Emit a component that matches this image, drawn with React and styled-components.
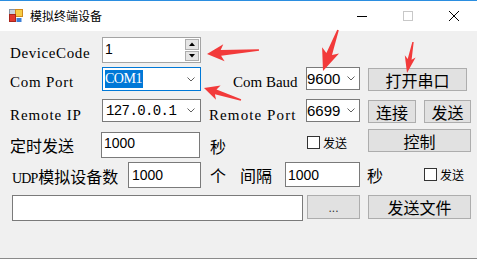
import React from 'react';
import styled, { createGlobalStyle } from 'styled-components';

const MONO = `"Liberation Mono", "DejaVu Sans Mono", monospace`;
const SERIF = `"Liberation Serif", "DejaVu Serif", serif`;
const CJK = `"Noto Sans CJK SC", "Noto Sans", sans-serif`;
const SANS = `"Liberation Sans", Arial, sans-serif`;

const Global = createGlobalStyle`
  html, body { margin: 0; padding: 0; background: #f0f0f0; }
  body { width: 477px; height: 259px; overflow: hidden; }
  * { box-sizing: border-box; }
`;

const Window = styled.div`
  position: relative;
  width: 477px;
  height: 259px;
  display: flex;
  flex-direction: column;
  background: #f0f0f0;
  overflow: hidden;
  font-family: ${CJK};
  color: #000;
`;

const TitleBar = styled.div`
  flex: none;
  height: 31px;
  border-top: 1px solid #2b8ee0;
  background: #fff;
  display: flex;
  align-items: center;
  padding-left: 9px;
`;

const TitleText = styled.span`
  margin-left: 7px;
  font-size: 12px;
  line-height: 16px;
`;

const Controls = styled.div`
  margin-left: auto;
  display: flex;
  height: 100%;
`;

const CtrlButton = styled.div`
  width: 46px;
  height: 100%;
  display: flex;
  align-items: center;
  justify-content: center;
`;

const Body = styled.div`
  flex: 1;
  display: flex;
  flex-direction: column;
  padding: 6px 0 0 10px;
  border-bottom: 1px solid #8a8a8a;
`;

const Row = styled.div`
  flex: none;
  display: flex;
  align-items: flex-start;
  height: ${p => p.$h}px;
  margin-top: ${p => p.$mt || 0}px;
`;

const Label = styled.span`
  flex: none;
  width: ${p => p.$w}px;
  margin-left: ${p => p.$ml || 0}px;
  margin-top: ${p => p.$dy || 0}px;
  font-family: ${p => (p.$latin ? SERIF : CJK)};
  font-size: ${p => (p.$latin ? 15 : 16)}px;
  letter-spacing: ${p => p.$ls || 0}px;
  line-height: 20px;
  white-space: nowrap;
`;

const Latin = styled.span`
  font-family: ${SERIF};
  font-size: 14px;
  letter-spacing: -0.9px;
  margin-right: 1px;
`;

const TextBox = styled.div`
  flex: none;
  width: ${p => p.$w}px;
  height: ${p => p.$h}px;
  margin-left: ${p => p.$ml || 0}px;
  margin-top: ${p => p.$dy || 0}px;
  padding: ${p => p.$pt ?? 1}px 0 0 ${p => p.$pl ?? 2}px;
  background: #fff;
  border: 1px solid #7a7a7a;
  font-family: ${SANS};
  font-size: 14px;
  line-height: 18px;
  white-space: nowrap;
`;

const SpinBox = styled.div`
  flex: none;
  width: ${p => p.$w}px;
  height: ${p => p.$h}px;
  display: flex;
  background: #fff;
  border: 1px solid #a4a4a4;
`;

const SpinValue = styled.span`
  flex: 1;
  padding: 2px 0 0 2px;
  font-family: ${SANS};
  font-size: 14px;
  line-height: 18px;
`;

const SpinCol = styled.div`
  width: 15px;
  display: flex;
  flex-direction: column;
  padding: 1px 1px 1px 0;
`;

const SpinBtn = styled.div`
  flex: 1;
  display: flex;
  align-items: center;
  justify-content: center;
  background: #e5e5e5;
  border: 1px solid #adadad;
  & + & { margin-top: 1px; }
`;

const Combo = styled.div`
  flex: none;
  width: ${p => p.$w}px;
  height: ${p => p.$h}px;
  margin-left: ${p => p.$ml || 0}px;
  display: flex;
  align-items: center;
  padding-left: ${p => p.$pl ?? 2}px;
  background: #fff;
  border: 1px solid ${p => (p.$focus ? '#0078d7' : '#7a7a7a')};
`;

const ComboText = styled.span`
  font-family: ${p => (p.$mono ? MONO : SANS)};
  font-size: ${p => (p.$mono ? 14 : 15)}px;
  letter-spacing: ${p => (p.$mono ? '-0.6px' : '0')};
  line-height: 18px;
  white-space: nowrap;
`;

const Selected = styled.span`
  font-family: ${SERIF};
  font-size: 14px;
  letter-spacing: -0.5px;
  line-height: 18px;
  padding: 0 1px 0 0;
  background: #0078d7;
  color: #fff;
`;

const Chevron = styled.svg`
  margin-left: auto;
  margin-right: ${p => p.$mr ?? 5}px;
  flex: none;
`;

const Button = styled.div`
  flex: none;
  width: ${p => p.$w}px;
  height: ${p => p.$h}px;
  margin-left: ${p => p.$ml || 0}px;
  margin-top: ${p => p.$dy || 0}px;
  display: flex;
  align-items: center;
  justify-content: center;
  background: #e1e1e1;
  border: 1px solid #adadad;
  font-family: ${CJK};
  font-size: 16px;
  line-height: 1;
  white-space: nowrap;
`;

const Dots = styled.span`
  font-family: ${SANS};
  font-size: 12px;
  margin-top: 2px;
  color: #333;
`;

const Check = styled.div`
  flex: none;
  width: ${p => p.$w}px;
  margin-left: ${p => p.$ml || 0}px;
  margin-top: ${p => p.$dy || 0}px;
  display: flex;
  align-items: center;
`;

const Box = styled.span`
  width: 13px;
  height: 13px;
  background: #fff;
  border: 1px solid #333;
`;

const CheckText = styled.span`
  margin-left: 3px;
  font-size: 12px;
  line-height: 13px;
`;

const Overlay = styled.svg`
  position: absolute;
  left: 0;
  top: 0;
  pointer-events: none;
`;

function arrowPoints(tip, tail, headLen, headHalf, near, far) {
  const [tx, ty] = tip;
  const dx = tail[0] - tx, dy = tail[1] - ty;
  const len = Math.hypot(dx, dy);
  const ux = dx / len, uy = dy / len, px = -uy, py = ux;
  const p = (a, s) => [tx + ux * a + px * s, ty + uy * a + py * s];
  return [
    p(0, 0), p(headLen, headHalf), p(headLen * 0.82, near), p(len, far),
    p(len, -far), p(headLen * 0.82, -near), p(headLen, -headHalf),
  ].map(q => q.map(v => v.toFixed(1)).join(',')).join(' ');
}

const arrows = [
  { tip: [207, 54], tail: [259, 50], hl: 17, hh: 8.5, n: 2.8, f: 0.8 },
  { tip: [204, 88], tail: [241, 100], hl: 15, hh: 7.5, n: 2.5, f: 0.8 },
  { tip: [323, 71], tail: [338, 30], hl: 22, hh: 9, n: 3, f: 0.8 },
  { tip: [407, 73], tail: [413, 42], hl: 17, hh: 5.5, n: 2, f: 0.7 },
];

const ChevronIcon = ({ mr }) => (
  <Chevron $mr={mr} width="8" height="5" viewBox="0 0 8 5">
    <path d="M0.5 0.5 L4 4 L7.5 0.5" fill="none" stroke="#606060" strokeWidth="1" />
  </Chevron>
);

export default function App() {
  return (
    <Window>
      <Global />
      <TitleBar>
        <svg width="14" height="14" viewBox="0 0 14 14">
          <rect x="0.5" y="0.5" width="6" height="5" fill="#c9d3de" stroke="#8795a6" />
          <rect x="6.5" y="0.5" width="7" height="7" fill="#f7cc45" stroke="#d08a1c" />
          <rect x="0.5" y="5.5" width="6" height="7" fill="#e0392d" stroke="#a8251c" />
          <rect x="7.5" y="9" width="5" height="4" fill="#3b7fd6" />
        </svg>
        <TitleText>模拟终端设备</TitleText>
        <Controls>
          <CtrlButton>
            <svg width="10" height="10" viewBox="0 0 10 10">
              <path d="M0 5.5 H10" stroke="#000" strokeWidth="1" />
            </svg>
          </CtrlButton>
          <CtrlButton>
            <svg width="10" height="10" viewBox="0 0 10 10">
              <rect x="0.5" y="0.5" width="9" height="9" fill="none" stroke="#c8c8c8" />
            </svg>
          </CtrlButton>
          <CtrlButton>
            <svg width="10" height="10" viewBox="0 0 10 10">
              <path d="M0 0 L10 10 M10 0 L0 10" stroke="#000" strokeWidth="1" />
            </svg>
          </CtrlButton>
        </Controls>
      </TitleBar>

      <Body>
        <Row $h={26}>
          <Label $latin $ls={0.6} $w={92} $dy={6}>DeviceCode</Label>
          <SpinBox $w={99} $h={26}>
            <SpinValue>1</SpinValue>
            <SpinCol>
              <SpinBtn>
                <svg width="6" height="4" viewBox="0 0 6 4"><path d="M0 4 L3 0.5 L6 4 Z" fill="#000" /></svg>
              </SpinBtn>
              <SpinBtn>
                <svg width="6" height="4" viewBox="0 0 6 4"><path d="M0 0 L3 3.5 L6 0 Z" fill="#000" /></svg>
              </SpinBtn>
            </SpinCol>
          </SpinBox>
        </Row>

        <Row $h={24} $mt={4}>
          <Label $latin $ls={0.75} $w={92} $dy={5}>Com Port</Label>
          <Combo $w={99} $h={24} $focus>
            <Selected>COM1</Selected>
            <ChevronIcon mr={5} />
          </Combo>
          <Label $latin $ls={0} $w={73} $ml={32} $dy={5}>Com Baud</Label>
          <Combo $w={54} $h={23} $pl={0}>
            <ComboText>9600</ComboText>
            <ChevronIcon mr={4} />
          </Combo>
          <Button $w={99} $h={23} $ml={8} $dy={1}>打开串口</Button>
        </Row>

        <Row $h={24} $mt={8}>
          <Label $latin $ls={0.9} $w={92} $dy={6}>Remote IP</Label>
          <Combo $w={99} $h={23} $pl={3}>
            <ComboText $mono>127.0.0.1</ComboText>
            <ChevronIcon mr={5} />
          </Combo>
          <Label $latin $ls={1.1} $w={97} $ml={8} $dy={6}>Remote Port</Label>
          <Combo $w={54} $h={23} $pl={0}>
            <ComboText>6699</ComboText>
            <ChevronIcon mr={4} />
          </Combo>
          <Button $w={48} $h={23} $ml={8} $dy={1}>连接</Button>
          <Button $w={47} $h={23} $ml={8} $dy={1}>发送</Button>
        </Row>

        <Row $h={29} $mt={6}>
          <Label $w={91} $dy={6}>定时发送</Label>
          <TextBox $w={99} $h={26} $dy={3}>1000</TextBox>
          <Label $w={97} $ml={10} $dy={7}>秒</Label>
          <Check $w={61} $dy={7}>
            <Box />
            <CheckText>发送</CheckText>
          </Check>
          <Button $w={103} $h={23}>控制</Button>
        </Row>

        <Row $h={26} $mt={4}>
          <Label $w={116} $ml={2} $dy={4}><Latin>UDP</Latin>模拟设备数</Label>
          <TextBox $w={73} $h={26} $pt={3} $pl={3}>1000</TextBox>
          <Label $w={30} $ml={9} $dy={3}>个</Label>
          <Label $w={45} $dy={3}>间隔</Label>
          <TextBox $w={75} $h={25} $pt={3} $pl={2}>1000</TextBox>
          <Label $w={57} $ml={7} $dy={3}>秒</Label>
          <Check $w={50} $dy={6}>
            <Box />
            <CheckText>发送</CheckText>
          </Check>
        </Row>

        <Row $h={26} $mt={7}>
          <TextBox $w={291} $h={26} $ml={2} />
          <Button $w={53} $h={24} $ml={4}><Dots>...</Dots></Button>
          <Button $w={103} $h={24} $ml={8}>发送文件</Button>
        </Row>
      </Body>

      <Overlay width="477" height="259" viewBox="0 0 477 259">
        {arrows.map((a, i) => (
          <polygon key={i} points={arrowPoints(a.tip, a.tail, a.hl, a.hh, a.n, a.f)} fill="#f23a3a" />
        ))}
      </Overlay>
    </Window>
  );
}
